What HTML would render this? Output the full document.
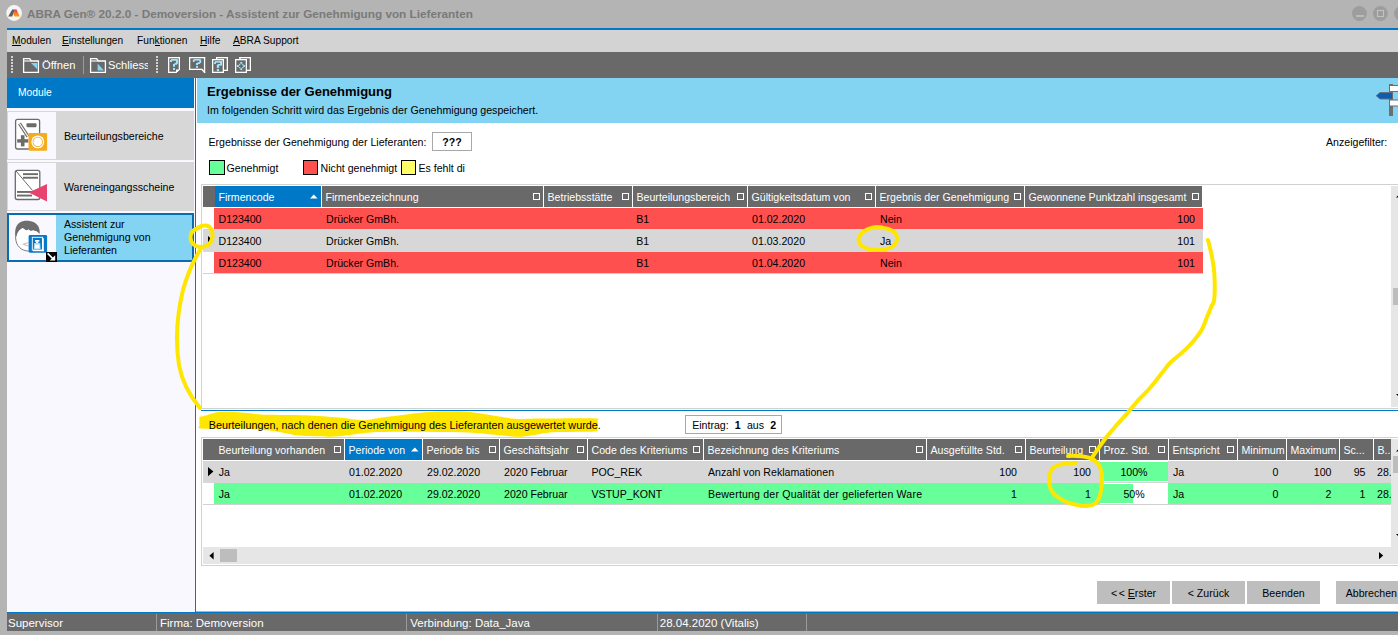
<!DOCTYPE html>
<html><head><meta charset="utf-8">
<style>
*{box-sizing:border-box;margin:0;padding:0}
html,body{width:1398px;height:635px;overflow:hidden;background:#b4b4b4;font-family:"Liberation Sans",sans-serif;font-size:10.6px;color:#000;position:relative}
.a{position:absolute}
.t{position:absolute;white-space:nowrap;line-height:13px}
svg{position:absolute;overflow:visible}
u{text-decoration:none;border-bottom:1px solid currentColor;display:inline-block;line-height:9.5px}
</style></head><body>
<svg style="left:5px;top:4px" width="19" height="19" viewBox="0 0 19 19"><defs><linearGradient id="lg" x1="0" y1="0" x2="0" y2="1"><stop offset="0" stop-color="#e8207a"/><stop offset="0.45" stop-color="#f5702a"/><stop offset="1" stop-color="#f5a800"/></linearGradient></defs><circle cx="9.1" cy="9" r="7.9" fill="#f4f4f4"/><path d="M3.2 12.6 L7.2 12.6 L10 5.4 L7.2 5.4 Z" fill="#5e5e5e"/><path d="M9.8 5.4 L11.5 5.4 L14.8 12.6 L9.4 12.6 L8.3 9.6 Z" fill="url(#lg)"/></svg>
<div class="t" style="left:27px;top:7.43px;font-size:11.76px;color:#7a7a7a;font-weight:bold;">ABRA Gen® 20.2.0 - Demoversion - Assistent zur Genehmigung von Lieferanten</div>
<svg style="left:1350px;top:5px" width="48" height="17"><circle cx="9.4" cy="8.5" r="7.4" fill="#9d9d9d"/><rect x="6" y="10.2" width="8" height="1.6" fill="#c2c2c2"/><circle cx="30.4" cy="8.5" r="7.4" fill="#9d9d9d"/><rect x="27.5" y="5.5" width="6" height="6" fill="none" stroke="#c2c2c2" stroke-width="1.1"/><circle cx="51.5" cy="8.5" r="7.4" fill="#9d9d9d"/></svg>
<div class="a" style="left:7px;top:28px;width:1391px;height:2px;background:#0078c8;"></div>
<div class="a" style="left:7px;top:30px;width:1391px;height:22px;background:#d3d3d3;"></div>
<div class="t" style="left:12px;top:33.97px;font-size:10.2px;color:#000;"><u>M</u>odulen</div>
<div class="t" style="left:62px;top:33.97px;font-size:10.2px;color:#000;"><u>E</u>instellungen</div>
<div class="t" style="left:137px;top:33.97px;font-size:10.2px;color:#000;">Fun<u>k</u>tionen</div>
<div class="t" style="left:200px;top:33.97px;font-size:10.2px;color:#000;"><u>H</u>ilfe</div>
<div class="t" style="left:233px;top:33.97px;font-size:10.2px;color:#000;"><u>A</u>BRA Support</div>
<div class="a" style="left:7px;top:52px;width:1391px;height:26px;background:#696969;"></div>
<svg style="left:11px;top:56px" width="2" height="17"><g fill="#d2d2d2"><rect y="0" width="2" height="2"/><rect y="3" width="2" height="2"/><rect y="6" width="2" height="2"/><rect y="9" width="2" height="2"/><rect y="12" width="2" height="2"/><rect y="15" width="2" height="2"/></g></svg>
<svg style="left:22px;top:57px" width="18" height="17" viewBox="0 0 18 17"><path d="M1.6 1.6 H7.6 L9.4 4 H16.4 V15.4 H1.6 Z" fill="none" stroke="#fff" stroke-width="1.3"/><path d="M1.6 4 H9.4" stroke="#fff" stroke-width="1.1"/><path d="M9 6 H15.2 V12.2 Z" fill="#83d3f2"/></svg>
<div class="t" style="left:42px;top:58.62px;font-size:11.2px;color:#fff;">Öffnen</div>
<div class="a" style="left:83px;top:56px;width:1px;height:18px;background:#9c9c9c;"></div>
<svg style="left:89px;top:57px" width="18" height="17" viewBox="0 0 18 17"><path d="M1.6 1.6 H7.6 L9.4 4 H16.4 V15.4 H1.6 Z" fill="none" stroke="#fff" stroke-width="1.3"/><path d="M1.6 4 H9.4" stroke="#fff" stroke-width="1.1"/><path d="M8.6 6.4 V13.4 H15 Z" fill="#83d3f2"/></svg>
<div class="a" style="left:108px;top:52px;width:40px;height:26px;overflow:hidden">
<div class="t" style="left:0px;top:6.62px;font-size:11.2px;color:#fff;">Schliessen</div>
</div>
<svg style="left:156px;top:56px" width="2" height="17"><g fill="#d2d2d2"><rect y="0" width="2" height="2"/><rect y="3" width="2" height="2"/><rect y="6" width="2" height="2"/><rect y="9" width="2" height="2"/><rect y="12" width="2" height="2"/><rect y="15" width="2" height="2"/></g></svg>
<svg style="left:0;top:0" width="260" height="78"><rect x="168" y="57" width="12" height="1.3" fill="#fff"/><rect x="168" y="57" width="1.3" height="16" fill="#fff"/><rect x="168" y="71.7" width="8.6" height="1.3" fill="#fff"/><rect x="178.7" y="57" width="1.3" height="12.8" fill="#fff"/><path d="M176 73 L176 69.6 L180 69.6 Z" fill="#fff"/><path d="M176.2 72.6 L179.6 69.6" stroke="#fff" stroke-width="1"/><rect x="170" y="60" width="2" height="2" fill="#9ee4fc"/><rect x="171" y="59" width="6.5" height="1.8" fill="#9ee4fc"/><rect x="176" y="59.5" width="2" height="4.3" fill="#9ee4fc"/><rect x="174.5" y="62.8" width="2.5" height="2" fill="#9ee4fc"/><rect x="173" y="64" width="2" height="2.8" fill="#9ee4fc"/><rect x="173" y="68" width="2" height="2" fill="#9ee4fc"/><rect x="189" y="57" width="16.2" height="1.3" fill="#fff"/><rect x="189" y="57" width="1.3" height="13" fill="#fff"/><rect x="189" y="68.7" width="13" height="1.3" fill="#fff"/><rect x="203.9" y="57" width="1.3" height="16" fill="#fff"/><path d="M201.8 69.3 L205 72.8" stroke="#fff" stroke-width="1.3"/><rect x="192.8" y="60" width="1.8" height="2" fill="#9ee4fc"/><rect x="193.5" y="59" width="6.8" height="1.6" fill="#9ee4fc"/><rect x="199.4" y="59.5" width="1.8" height="3.6" fill="#9ee4fc"/><rect x="197.5" y="62.2" width="2.5" height="1.8" fill="#9ee4fc"/><rect x="196" y="63" width="2" height="2.2" fill="#9ee4fc"/><rect x="196" y="66.1" width="2" height="1.9" fill="#9ee4fc"/><rect x="216" y="57" width="12" height="1.3" fill="#fff"/><rect x="216" y="57" width="1.3" height="2" fill="#fff"/><rect x="226.7" y="57" width="1.3" height="14" fill="#fff"/><rect x="224" y="69.7" width="4" height="1.3" fill="#fff"/><rect x="212" y="59" width="12" height="1.3" fill="#fff"/><rect x="212" y="59" width="1.3" height="14" fill="#fff"/><rect x="212" y="71.7" width="12" height="1.3" fill="#fff"/><rect x="222.7" y="59" width="1.3" height="14" fill="#fff"/><rect x="214.1" y="62" width="1.9" height="2" fill="#9ee4fc"/><rect x="214.9" y="61.1" width="7" height="1.6" fill="#9ee4fc"/><rect x="220.1" y="61.1" width="1.9" height="4.3" fill="#9ee4fc"/><rect x="217.5" y="64" width="3.5" height="1.6" fill="#9ee4fc"/><rect x="216.8" y="65" width="2.3" height="2.9" fill="#9ee4fc"/><rect x="216.8" y="68.9" width="2.3" height="2.2" fill="#9ee4fc"/><rect x="239.3" y="57" width="11.7" height="1.3" fill="#fff"/><rect x="239.3" y="57" width="1.3" height="2" fill="#fff"/><rect x="249.7" y="57" width="1.3" height="14" fill="#fff"/><rect x="247" y="69.7" width="4" height="1.3" fill="#fff"/><rect x="235" y="59" width="12" height="1.3" fill="#fff"/><rect x="235" y="59" width="1.3" height="14" fill="#fff"/><rect x="235" y="71.7" width="12" height="1.3" fill="#fff"/><rect x="245.7" y="59" width="1.3" height="14" fill="#fff"/><rect x="240.3" y="62" width="1.9" height="1.8" fill="#9ee4fc"/><rect x="236.9" y="65.1" width="1.9" height="1.9" fill="#9ee4fc"/><rect x="243.2" y="65.1" width="1.9" height="1.9" fill="#9ee4fc"/><rect x="240.3" y="68.2" width="1.9" height="1.9" fill="#9ee4fc"/><rect x="239.2" y="63.8" width="1.1" height="1.3" fill="#9ee4fc"/><rect x="242.2" y="63.8" width="1.1" height="1.3" fill="#9ee4fc"/><rect x="238.8" y="64.6" width="0.9" height="0.9" fill="#9ee4fc"/><rect x="242.6" y="64.6" width="0.9" height="0.9" fill="#9ee4fc"/><rect x="239.2" y="67" width="1.1" height="1.2" fill="#9ee4fc"/><rect x="242.2" y="67" width="1.1" height="1.2" fill="#9ee4fc"/><rect x="238.8" y="67.2" width="0.9" height="0.9" fill="#9ee4fc"/><rect x="242.6" y="67.2" width="0.9" height="0.9" fill="#9ee4fc"/></svg>
<div class="a" style="left:7px;top:78px;width:188px;height:534px;background:#f8f8fe;"></div>
<div class="a" style="left:7px;top:78px;width:187px;height:30px;background:#0078c8;"></div>
<div class="t" style="left:18px;top:85.93px;font-size:10.3px;color:#fff;">Module</div>
<div class="a" style="left:7px;top:111px;width:187px;height:49px;background:#d7d7d7;"></div>
<div class="a" style="left:8px;top:112px;width:48px;height:47px;background:#f8f8fe;"></div>
<svg style="left:8px;top:112px" width="48" height="48" viewBox="0 0 48 48">
<rect x="7.6" y="7.4" width="24" height="29.6" rx="2" fill="#fff" stroke="#6b6b6b" stroke-width="1.3"/>
<path d="M11.5 11.5 L20 24.5" stroke="#6b6b6b" stroke-width="3.2"/><path d="M11.5 11.5 L20 24.5" stroke="#fff" stroke-width="1.2"/>
<rect x="18.5" y="11.2" width="10" height="4" rx="1" fill="#6b6b6b"/>
<rect x="9.2" y="27.2" width="11.2" height="3.4" fill="#6b6b6b"/><rect x="12.9" y="23.2" width="3.6" height="11.2" fill="#6b6b6b"/>
<rect x="20.5" y="21" width="18.6" height="17.8" rx="1.2" fill="#f4ab1c"/>
<circle cx="29.8" cy="29.9" r="6.4" fill="#fff"/><circle cx="29.8" cy="29.9" r="5.2" fill="#f4ab1c"/><circle cx="29.8" cy="29.9" r="4.4" fill="#fff"/>
</svg>
<div class="t" style="left:64px;top:129.53px;font-size:10.6px;color:#000;">Beurteilungsbereiche</div>
<div class="a" style="left:7px;top:162px;width:187px;height:49px;background:#d7d7d7;"></div>
<div class="a" style="left:8px;top:163px;width:48px;height:47px;background:#f8f8fe;"></div>
<svg style="left:0px;top:150px" width="56" height="60" viewBox="0 0 56 60">
<rect x="15.3" y="20.3" width="24.5" height="29.2" rx="2" fill="#fff" stroke="#6b6b6b" stroke-width="1.3"/>
<path d="M16 21 L32.5 40.5" stroke="#6b6b6b" stroke-width="1"/>
<rect x="23" y="23.2" width="15" height="1.9" fill="#6b6b6b"/><rect x="23" y="26.8" width="15" height="1.9" fill="#6b6b6b"/>
<rect x="17" y="41" width="15" height="1.9" fill="#6b6b6b"/><rect x="17" y="44.6" width="15" height="1.9" fill="#6b6b6b"/>
<path d="M47 34 L28.8 42.4 L47 51.6 Z" fill="#e8436e"/>
</svg>
<div class="t" style="left:64px;top:180.83px;font-size:10.6px;color:#000;">Wareneingangsscheine</div>
<div class="a" style="left:7px;top:213px;width:187px;height:49px;background:#83d3f2;border:2px solid #0a6cb0;"></div>
<div class="a" style="left:9px;top:215px;width:47px;height:45px;background:#f8f8fe;"></div>
<svg style="left:0px;top:0px" width="60" height="270">
<path d="M15.5 238.5 C14.6 232 15.2 226.5 18.5 223.5 C21.5 221 25 220.7 28 220.8 C32 221 35.5 222.5 37.8 225.5 C39.5 228 39.9 231 39.7 234 L38.2 232.8 L36.7 231.6 L33.4 230.5 L30.4 231 L28.6 229.4 L26.7 230.5 L24.5 229.4 L22.7 228 L20.1 229.8 C18.5 231 17.2 233.5 16.6 236.4 Z" fill="#6e6e6e"/>
<path d="M16.6 236.4 C17.2 233.5 18.5 231 20.1 229.8 L22.7 228 L24.5 229.4 L26.7 230.5 L28.6 229.4 L30.4 231 L33.4 230.5 L36.7 231.6 L39.7 234 L29 236 L28.8 251.2 C24 250.5 20 248.5 17.8 245 C16.4 242.5 16 239.5 16.6 236.4 Z" fill="#fff"/>
<path d="M15.6 237.5 C15.8 242 17 245 19.5 247.5 C22 249.8 25 250.8 28.8 251.2" fill="none" stroke="#6e6e6e" stroke-width="0.9"/>
<path d="M28.2 242.6 L23.4 244.3 L28.2 246" fill="none" stroke="#c4c4c4" stroke-width="1.1"/>
<rect x="28.6" y="235" width="18.5" height="17.7" rx="1.4" fill="#0a78c8"/>
<rect x="32.3" y="237.3" width="10.3" height="12.8" fill="none" stroke="#fff" stroke-width="0.9"/>
<rect x="42" y="238.2" width="1.8" height="13" fill="#fff"/><rect x="33" y="249.8" width="10.8" height="1.4" fill="#fff"/>
<rect x="35" y="240" width="4.4" height="1.7" fill="#fff"/><rect x="36" y="241.5" width="2.3" height="1.7" fill="#fff"/>
<path d="M34.2 243.1 H40.2 L40.6 249.2 H33.8 Z" fill="#9fdcf6"/><rect x="34.8" y="244.6" width="4.6" height="3.8" fill="#fff"/>
<rect x="46" y="252" width="11" height="10" fill="#000"/>
<path d="M47.6 253.3 L52.6 258.3" stroke="#fff" stroke-width="1.7"/><path d="M55.2 255.2 V260.6 H49.8 Z" fill="#fff"/>
</svg>
<div class="t" style="left:64px;top:218.43px;line-height:12.8px;font-size:10.6px">Assistent zur<br>Genehmigung von<br>Lieferanten</div>
<div class="a" style="left:195px;top:78px;width:1px;height:534px;background:#0078c8;"></div>
<div class="a" style="left:196px;top:78px;width:1202px;height:533px;background:#fff;"></div>
<div class="a" style="left:197px;top:78px;width:1201px;height:45px;background:#83d3f2;"></div>
<div class="t" style="left:207px;top:84.50px;font-size:13px;color:#000;font-weight:bold;">Ergebnisse der Genehmigung</div>
<div class="t" style="left:207px;top:104.01px;font-size:10.65px;color:#000;">Im folgenden Schritt wird das Ergebnis der Genehmigung gespeichert.</div>
<svg style="left:1374px;top:82px" width="24" height="36" viewBox="0 0 24 36">
<rect x="15" y="2" width="4" height="32" fill="#6e6e6e"/>
<rect x="15.5" y="3.5" width="10" height="6" fill="#fff" stroke="#6e6e6e" stroke-width="1"/>
<path d="M18.5 10.5 H6 L2.2 13.8 L6 17 H18.5 Z" fill="#0a5fb4" stroke="#6e6e6e" stroke-width="0.9"/>
<rect x="15.5" y="18" width="10" height="6" fill="#fff" stroke="#6e6e6e" stroke-width="1"/>
</svg>
<div class="t" style="left:208.5px;top:135.63px;font-size:10.6px;color:#000;">Ergebnisse der Genehmigung der Lieferanten:</div>
<div class="a" style="left:432px;top:132px;width:40px;height:19px;background:#fff;border:1px solid #a8a8a8;"></div>
<div class="t" style="left:432px;width:40px;text-align:center;top:135.63px;font-size:10.6px;color:#000;font-weight:bold;">???</div>
<div class="t" style="left:1326px;top:135.63px;font-size:10.6px;color:#000;">Anzeigefilter:</div>
<div class="a" style="left:209px;top:160px;width:16px;height:15px;background:#66ff99;border:1px solid #000;"></div>
<div class="t" style="left:226.5px;top:162.03px;font-size:10.6px;color:#000;">Genehmigt</div>
<div class="a" style="left:303px;top:160px;width:15px;height:15px;background:#ff5050;border:1px solid #000;"></div>
<div class="t" style="left:320.6px;top:162.03px;font-size:10.6px;color:#000;">Nicht genehmigt</div>
<div class="a" style="left:401px;top:160px;width:15px;height:15px;background:#ffff66;border:1px solid #000;"></div>
<div class="t" style="left:418.4px;top:162.03px;font-size:10.6px;color:#000;">Es fehlt di</div>
<div class="a" style="left:201px;top:184px;width:1197px;height:225px;background:#fff;border:1px solid #d2d2d2;border-right:none;"></div>
<div class="a" style="left:203px;top:186px;width:12px;height:21px;background:#696969;"></div>
<div class="a" style="left:215px;top:186px;width:106px;height:21px;background:#0078c8;"></div>
<div class="t" style="left:218.5px;top:191.43px;font-size:10.6px;color:#fff;">Firmencode</div>
<svg style="left:310px;top:194px" width="8" height="5"><path d="M0 4.6 L3.75 0.6 L7.5 4.6 Z" fill="#fff"/></svg>
<div class="a" style="left:322px;top:186px;width:221px;height:21px;background:#696969;"></div>
<div class="t" style="left:325.5px;top:191.43px;font-size:10.6px;color:#fff;">Firmenbezeichnung</div>
<div class="a" style="left:533px;top:193px;width:7px;height:7px;border:1.2px solid #fff"></div>
<div class="a" style="left:544px;top:186px;width:88px;height:21px;background:#696969;"></div>
<div class="t" style="left:547.5px;top:191.43px;font-size:10.6px;color:#fff;">Betriebsstätte</div>
<div class="a" style="left:622px;top:193px;width:7px;height:7px;border:1.2px solid #fff"></div>
<div class="a" style="left:633px;top:186px;width:114px;height:21px;background:#696969;"></div>
<div class="t" style="left:636.5px;top:191.43px;font-size:10.6px;color:#fff;">Beurteilungsbereich</div>
<div class="a" style="left:737px;top:193px;width:7px;height:7px;border:1.2px solid #fff"></div>
<div class="a" style="left:748px;top:186px;width:127px;height:21px;background:#696969;"></div>
<div class="t" style="left:751.5px;top:191.43px;font-size:10.6px;color:#fff;">Gültigkeitsdatum von</div>
<div class="a" style="left:865px;top:193px;width:7px;height:7px;border:1.2px solid #fff"></div>
<div class="a" style="left:876px;top:186px;width:148px;height:21px;background:#696969;"></div>
<div class="t" style="left:879.5px;top:191.43px;font-size:10.6px;color:#fff;">Ergebnis der Genehmigung</div>
<div class="a" style="left:1014px;top:193px;width:7px;height:7px;border:1.2px solid #fff"></div>
<div class="a" style="left:1025px;top:186px;width:177px;height:21px;background:#696969;"></div>
<div class="t" style="left:1028.5px;top:191.43px;font-size:10.6px;color:#fff;">Gewonnene Punktzahl insgesamt</div>
<div class="a" style="left:1192px;top:193px;width:7px;height:7px;border:1.2px solid #fff"></div>
<div class="a" style="left:214px;top:208px;width:989px;height:21px;background:#ff5050;"></div>
<div class="t" style="left:218.5px;top:212.63px;font-size:10.6px;color:#000;">D123400</div>
<div class="t" style="left:326px;top:212.63px;font-size:10.6px;color:#000;">Drücker GmBh.</div>
<div class="t" style="left:636.2px;top:212.63px;font-size:10.6px;color:#000;">B1</div>
<div class="t" style="left:752px;top:212.63px;font-size:10.6px;color:#000;">01.02.2020</div>
<div class="t" style="left:880px;top:212.63px;font-size:10.6px;color:#000;">Nein</div>
<div class="t" style="left:795px;width:400px;text-align:right;top:212.63px;font-size:10.6px;color:#000;">100</div>
<div class="a" style="left:203px;top:229px;width:1000px;height:23px;background:#d7d7d7;"></div>
<div class="t" style="left:218.5px;top:234.63px;font-size:10.6px;color:#000;">D123400</div>
<div class="t" style="left:326px;top:234.63px;font-size:10.6px;color:#000;">Drücker GmBh.</div>
<div class="t" style="left:636.2px;top:234.63px;font-size:10.6px;color:#000;">B1</div>
<div class="t" style="left:752px;top:234.63px;font-size:10.6px;color:#000;">01.03.2020</div>
<div class="t" style="left:880px;top:234.63px;font-size:10.6px;color:#000;">Ja</div>
<div class="t" style="left:795px;width:400px;text-align:right;top:234.63px;font-size:10.6px;color:#000;">101</div>
<div class="a" style="left:214px;top:252px;width:989px;height:21px;background:#ff5050;"></div>
<div class="t" style="left:218.5px;top:256.63px;font-size:10.6px;color:#000;">D123400</div>
<div class="t" style="left:326px;top:256.63px;font-size:10.6px;color:#000;">Drücker GmBh.</div>
<div class="t" style="left:636.2px;top:256.63px;font-size:10.6px;color:#000;">B1</div>
<div class="t" style="left:752px;top:256.63px;font-size:10.6px;color:#000;">01.04.2020</div>
<div class="t" style="left:880px;top:256.63px;font-size:10.6px;color:#000;">Nein</div>
<div class="t" style="left:795px;width:400px;text-align:right;top:256.63px;font-size:10.6px;color:#000;">101</div>
<svg style="left:207.5px;top:235.5px" width="6" height="9"><path d="M0 0 L5.2 4.5 L0 9 Z" fill="#000"/></svg>
<div class="a" style="left:203px;top:273px;width:1000px;height:1px;background:#d2d2d2;"></div>
<div class="a" style="left:1391px;top:186px;width:7px;height:221px;background:#e6e6e6;"></div>
<svg style="left:1395.5px;top:194px" width="6" height="4"><path d="M0 3.5 L3.5 0 L7 3.5 Z" fill="#000"/></svg>
<div class="a" style="left:1393px;top:288px;width:5px;height:17px;background:#bdbdbd;"></div>
<svg style="left:1395.5px;top:394px" width="6" height="4"><path d="M0 0 L3.5 3.5 L7 0 Z" fill="#000"/></svg>
<div class="a" style="left:201px;top:410px;width:1197px;height:1px;background:#0078c8;"></div>
<svg style="left:0;top:0" width="1398" height="635">
<path d="M200.0 416.8 C201.2 416.2 203.7 416.0 206.8 415.2 C209.9 414.4 214.0 412.6 218.6 412.1 C223.2 411.6 229.1 411.8 234.3 412.0 C239.5 412.2 244.8 412.8 250.0 413.3 C255.2 413.8 256.6 414.5 265.8 414.8 C275.0 415.1 292.8 414.7 305.0 415.2 C317.2 415.7 329.7 416.8 339.3 417.6 C348.9 418.5 356.3 420.2 362.9 420.3 C369.5 420.4 370.8 419.1 378.7 418.0 C386.6 416.9 401.7 415.0 410.0 414.0 C418.3 413.0 422.9 412.6 428.6 412.1 C434.3 411.7 437.8 411.4 444.3 411.3 C450.9 411.2 460.0 411.1 467.9 411.7 C475.8 412.3 483.6 414.0 491.5 415.2 C499.4 416.4 506.9 418.2 515.0 418.8 C523.1 419.4 526.8 418.7 540.0 418.6 C553.2 418.5 584.4 418.1 594.0 418.4 C603.6 418.7 596.9 418.6 597.5 420.5 C598.1 422.4 598.1 427.7 597.5 429.5 C596.9 431.3 600.7 431.0 594.0 431.4 C587.3 431.8 566.0 431.7 557.2 432.1 C548.5 432.5 546.8 433.0 541.5 433.7 C536.2 434.4 530.1 435.8 525.7 436.3 C521.3 436.8 519.4 436.9 515.0 436.7 C510.6 436.5 505.9 435.9 499.4 435.3 C492.9 434.7 485.0 433.4 475.8 432.9 C466.6 432.4 455.3 432.3 444.3 432.1 C433.3 431.9 420.9 431.8 410.0 431.8 C399.1 431.8 386.6 431.9 378.7 432.1 C370.8 432.4 368.1 432.8 362.9 433.3 C357.6 433.8 352.4 434.7 347.2 435.3 C342.0 435.9 338.5 436.6 331.5 436.7 C324.5 436.8 312.0 436.5 305.0 436.1 C298.0 435.7 294.6 435.0 289.4 434.1 C284.2 433.2 280.3 431.9 273.7 431.0 C267.1 430.1 257.9 429.4 250.0 429.0 C242.1 428.6 234.7 428.7 226.5 428.6 C218.3 428.5 205.5 429.2 201.0 428.6 C196.5 428.0 199.8 426.6 199.5 425.0 C199.2 423.4 199.4 420.4 199.5 419.0 C199.6 417.6 198.8 417.4 200.0 416.8 Z" fill="#ffe600"/>
</svg>
<div class="t" style="left:208.8px;top:418.76px;font-size:10.8px;color:#000;">Beurteilungen, nach denen die Genehmigung des Lieferanten ausgewertet wurde.</div>
<div class="a" style="left:685px;top:415px;width:97px;height:19px;background:#fff;border:1px solid #a8a8a8;"></div>
<div class="t" style="left:692.2px;top:418.73px;font-size:10.6px;color:#000;word-spacing:3.2px;">Eintrag: <b>1</b> aus <b>2</b></div>
<div class="a" style="left:201px;top:437px;width:1197px;height:129px;background:#fff;border:1px solid #d2d2d2;border-right:none;"></div>
<div class="a" style="left:203px;top:439px;width:141px;height:21px;background:#696969;"></div>
<div class="a" style="left:203px;top:439px;width:141px;height:21px;overflow:hidden">
<div class="t" style="left:15.5px;top:5.43px;font-size:10.6px;color:#fff;">Beurteilung vorhanden</div>
</div>
<div class="a" style="left:334px;top:446px;width:7px;height:7px;border:1.2px solid #fff"></div>
<div class="a" style="left:345px;top:439px;width:77px;height:21px;background:#0078c8;"></div>
<div class="a" style="left:345px;top:439px;width:77px;height:21px;overflow:hidden">
<div class="t" style="left:3.5px;top:5.43px;font-size:10.6px;color:#fff;">Periode von</div>
</div>
<svg style="left:411px;top:447px" width="8" height="5"><path d="M0 4.6 L3.75 0.6 L7.5 4.6 Z" fill="#fff"/></svg>
<div class="a" style="left:423px;top:439px;width:76px;height:21px;background:#696969;"></div>
<div class="a" style="left:423px;top:439px;width:76px;height:21px;overflow:hidden">
<div class="t" style="left:3.5px;top:5.43px;font-size:10.6px;color:#fff;">Periode bis</div>
</div>
<div class="a" style="left:489px;top:446px;width:7px;height:7px;border:1.2px solid #fff"></div>
<div class="a" style="left:500px;top:439px;width:87px;height:21px;background:#696969;"></div>
<div class="a" style="left:500px;top:439px;width:87px;height:21px;overflow:hidden">
<div class="t" style="left:3.5px;top:5.43px;font-size:10.6px;color:#fff;">Geschäftsjahr</div>
</div>
<div class="a" style="left:577px;top:446px;width:7px;height:7px;border:1.2px solid #fff"></div>
<div class="a" style="left:588px;top:439px;width:115px;height:21px;background:#696969;"></div>
<div class="a" style="left:588px;top:439px;width:115px;height:21px;overflow:hidden">
<div class="t" style="left:3.5px;top:5.43px;font-size:10.6px;color:#fff;">Code des Kriteriums</div>
</div>
<div class="a" style="left:693px;top:446px;width:7px;height:7px;border:1.2px solid #fff"></div>
<div class="a" style="left:704px;top:439px;width:222px;height:21px;background:#696969;"></div>
<div class="a" style="left:704px;top:439px;width:222px;height:21px;overflow:hidden">
<div class="t" style="left:3.5px;top:5.43px;font-size:10.6px;color:#fff;">Bezeichnung des Kriteriums</div>
</div>
<div class="a" style="left:916px;top:446px;width:7px;height:7px;border:1.2px solid #fff"></div>
<div class="a" style="left:927px;top:439px;width:98px;height:21px;background:#696969;"></div>
<div class="a" style="left:927px;top:439px;width:98px;height:21px;overflow:hidden">
<div class="t" style="left:3.5px;top:5.43px;font-size:10.6px;color:#fff;">Ausgefüllte Std.</div>
</div>
<div class="a" style="left:1015px;top:446px;width:7px;height:7px;border:1.2px solid #fff"></div>
<div class="a" style="left:1026px;top:439px;width:73px;height:21px;background:#696969;"></div>
<div class="a" style="left:1026px;top:439px;width:73px;height:21px;overflow:hidden">
<div class="t" style="left:3.5px;top:5.43px;font-size:10.6px;color:#fff;">Beurteilung</div>
</div>
<div class="a" style="left:1089px;top:446px;width:7px;height:7px;border:1.2px solid #fff"></div>
<div class="a" style="left:1100px;top:439px;width:68px;height:21px;background:#696969;"></div>
<div class="a" style="left:1100px;top:439px;width:68px;height:21px;overflow:hidden">
<div class="t" style="left:3.5px;top:5.43px;font-size:10.6px;color:#fff;">Proz. Std.</div>
</div>
<div class="a" style="left:1158px;top:446px;width:7px;height:7px;border:1.2px solid #fff"></div>
<div class="a" style="left:1169px;top:439px;width:68px;height:21px;background:#696969;"></div>
<div class="a" style="left:1169px;top:439px;width:68px;height:21px;overflow:hidden">
<div class="t" style="left:3.5px;top:5.43px;font-size:10.6px;color:#fff;">Entspricht</div>
</div>
<div class="a" style="left:1227px;top:446px;width:7px;height:7px;border:1.2px solid #fff"></div>
<div class="a" style="left:1238px;top:439px;width:48px;height:21px;background:#696969;"></div>
<div class="a" style="left:1238px;top:439px;width:48px;height:21px;overflow:hidden">
<div class="t" style="left:3.5px;top:5.43px;font-size:10.6px;color:#fff;">Minimum</div>
</div>
<div class="a" style="left:1287px;top:439px;width:52px;height:21px;background:#696969;"></div>
<div class="a" style="left:1287px;top:439px;width:52px;height:21px;overflow:hidden">
<div class="t" style="left:3.5px;top:5.43px;font-size:10.6px;color:#fff;">Maximum</div>
</div>
<div class="a" style="left:1340px;top:439px;width:33px;height:21px;background:#696969;"></div>
<div class="a" style="left:1340px;top:439px;width:33px;height:21px;overflow:hidden">
<div class="t" style="left:3.5px;top:5.43px;font-size:10.6px;color:#fff;">Sc...</div>
</div>
<div class="a" style="left:1374px;top:439px;width:17px;height:21px;background:#696969;"></div>
<div class="a" style="left:1374px;top:439px;width:17px;height:21px;overflow:hidden">
<div class="t" style="left:3.5px;top:5.43px;font-size:10.6px;color:#fff;">B..</div>
</div>
<div class="a" style="left:203px;top:461px;width:1188px;height:22px;background:#d7d7d7;"></div>
<div class="a" style="left:1100px;top:461px;width:68px;height:21px;background:#fff;"></div>
<div class="a" style="left:1100px;top:462px;width:68px;height:19px;background:#66ff99;"></div>
<div class="t" style="left:218.7px;top:465.63px;font-size:10.6px;color:#000;">Ja</div>
<div class="t" style="left:349px;top:465.63px;font-size:10.6px;color:#000;">01.02.2020</div>
<div class="t" style="left:427px;top:465.63px;font-size:10.6px;color:#000;">29.02.2020</div>
<div class="t" style="left:504px;top:465.63px;font-size:10.6px;color:#000;">2020 Februar</div>
<div class="t" style="left:591.5px;top:465.63px;font-size:10.6px;color:#000;">POC_REK</div>
<div class="t" style="left:708px;top:465.63px;font-size:10.6px;color:#000;">Anzahl von Reklamationen</div>
<div class="t" style="left:617px;width:400px;text-align:right;top:465.63px;font-size:10.6px;color:#000;">100</div>
<div class="t" style="left:691px;width:400px;text-align:right;top:465.63px;font-size:10.6px;color:#000;">100</div>
<div class="t" style="left:1100px;width:68px;text-align:center;top:465.63px;font-size:10.6px;color:#000;">100%</div>
<div class="t" style="left:1173px;top:465.63px;font-size:10.6px;color:#000;">Ja</div>
<div class="t" style="left:878.5px;width:400px;text-align:right;top:465.63px;font-size:10.6px;color:#000;">0</div>
<div class="t" style="left:931.5px;width:400px;text-align:right;top:465.63px;font-size:10.6px;color:#000;">100</div>
<div class="t" style="left:965.5px;width:400px;text-align:right;top:465.63px;font-size:10.6px;color:#000;">95</div>
<div class="t" style="left:1377px;top:465.63px;font-size:10.6px;color:#000;width:14px;overflow:hidden;">28.</div>
<div class="a" style="left:214px;top:483px;width:1177px;height:21px;background:#66ff99;"></div>
<div class="a" style="left:1100px;top:483px;width:68px;height:21px;background:#fff;"></div>
<div class="a" style="left:1100px;top:484px;width:33px;height:19px;background:#66ff99;"></div>
<div class="t" style="left:218.7px;top:487.63px;font-size:10.6px;color:#000;">Ja</div>
<div class="t" style="left:349px;top:487.63px;font-size:10.6px;color:#000;">01.02.2020</div>
<div class="t" style="left:427px;top:487.63px;font-size:10.6px;color:#000;">29.02.2020</div>
<div class="t" style="left:504px;top:487.63px;font-size:10.6px;color:#000;">2020 Februar</div>
<div class="t" style="left:591.5px;top:487.63px;font-size:10.6px;color:#000;">VSTUP_KONT</div>
<div class="t" style="left:708px;top:487.63px;font-size:10.6px;color:#000;letter-spacing:0.17px;">Bewertung der Qualität der gelieferten Ware</div>
<div class="t" style="left:617px;width:400px;text-align:right;top:487.63px;font-size:10.6px;color:#000;">1</div>
<div class="t" style="left:691px;width:400px;text-align:right;top:487.63px;font-size:10.6px;color:#000;">1</div>
<div class="t" style="left:1100px;width:68px;text-align:center;top:487.63px;font-size:10.6px;color:#000;">50%</div>
<div class="t" style="left:1173px;top:487.63px;font-size:10.6px;color:#000;">Ja</div>
<div class="t" style="left:878.5px;width:400px;text-align:right;top:487.63px;font-size:10.6px;color:#000;">0</div>
<div class="t" style="left:931.5px;width:400px;text-align:right;top:487.63px;font-size:10.6px;color:#000;">2</div>
<div class="t" style="left:965.5px;width:400px;text-align:right;top:487.63px;font-size:10.6px;color:#000;">1</div>
<div class="t" style="left:1377px;top:487.63px;font-size:10.6px;color:#000;width:14px;overflow:hidden;">28.</div>
<div class="a" style="left:203px;top:504px;width:1188px;height:1px;background:#d2d2d2;"></div>
<svg style="left:207.5px;top:467.2px" width="6" height="9"><path d="M0 0 L5.4 4.6 L0 9.2 Z" fill="#000"/></svg>
<div class="a" style="left:1391px;top:439px;width:7px;height:108px;background:#e6e6e6;"></div>
<svg style="left:1395.5px;top:448px" width="6" height="4"><path d="M0 3.5 L3.5 0 L7 3.5 Z" fill="#000"/></svg>
<div class="a" style="left:1393px;top:456px;width:5px;height:17px;background:#bdbdbd;"></div>
<svg style="left:1395.5px;top:534px" width="6" height="4"><path d="M0 0 L3.5 3.5 L7 0 Z" fill="#000"/></svg>
<div class="a" style="left:203px;top:547px;width:1195px;height:17px;background:#e6e6e6;"></div>
<svg style="left:209px;top:551.5px" width="5" height="8"><path d="M4.6 0 L0.4 3.8 L4.6 7.6 Z" fill="#000"/></svg>
<div class="a" style="left:220px;top:549px;width:17px;height:13px;background:#bdbdbd;"></div>
<svg style="left:1379px;top:552px" width="5" height="8"><path d="M0 0 L4.2 3.6 L0 7.2 Z" fill="#000"/></svg>
<div class="a" style="left:1097px;top:581px;width:73px;height:23px;background:#bebebe;"></div>
<div class="t" style="left:1097px;width:73px;text-align:center;top:586.53px;font-size:10.6px;color:#000;">&lt;<span style="margin-left:1.5px">&lt;</span> <u>E</u>rster</div>
<div class="a" style="left:1172px;top:581px;width:73px;height:23px;background:#bebebe;"></div>
<div class="t" style="left:1172px;width:73px;text-align:center;top:586.53px;font-size:10.6px;color:#000;">&lt; Zurück</div>
<div class="a" style="left:1247px;top:581px;width:73px;height:23px;background:#bebebe;"></div>
<div class="t" style="left:1247px;width:73px;text-align:center;top:586.53px;font-size:10.6px;color:#000;">Beenden</div>
<div class="a" style="left:1336px;top:581px;width:84px;height:23px;background:#bebebe;"></div>
<div class="t" style="left:1345.7px;top:586.53px;font-size:10.6px;color:#000;">Abbrechen</div>
<div class="a" style="left:7px;top:612px;width:1391px;height:1px;background:#0078c8;"></div>
<div class="a" style="left:7px;top:613px;width:1391px;height:18px;background:#696969;"></div>
<div class="t" style="left:8px;top:616.52px;font-size:11.5px;color:#fff;">Supervisor</div>
<div class="t" style="left:160px;top:616.52px;font-size:11.5px;color:#fff;">Firma: Demoversion</div>
<div class="t" style="left:410.3px;top:616.52px;font-size:11.5px;color:#fff;">Verbindung: Data_Java</div>
<div class="t" style="left:659.8px;top:616.52px;font-size:11.5px;color:#fff;">28.04.2020 (Vitalis)</div>
<div class="a" style="left:156px;top:614px;width:1px;height:17px;background:#9a9a9a;"></div>
<div class="a" style="left:406px;top:614px;width:1px;height:17px;background:#9a9a9a;"></div>
<div class="a" style="left:657px;top:614px;width:1px;height:17px;background:#9a9a9a;"></div>
<div class="a" style="left:806px;top:614px;width:1px;height:17px;background:#9a9a9a;"></div>
<svg style="left:0;top:0" width="1398" height="635"><g fill="none" stroke="#ffe600" stroke-width="4" stroke-linecap="round" stroke-linejoin="round">
<path d="M198 227.5 C203 224.5 210 224 212 231 C214 239 210 246.5 202 247 C195 247.5 190.5 243 190.5 237.5 C190.5 232 194 229 199 228"/>
<path d="M202 247 C196 256 188 272 183 290 C177 315 175 340 179 365 C182 382 190 396 200 408"/>
<path d="M882 227.5 C873 225.5 863 230 859 237 C856.5 244 864 250 877 250 C890 250 897 245.5 897 238.5 C897 232 890 227.5 876 227.5"/>
<path d="M1208.0 240.0 C1208.7 242.8 1211.0 251.5 1212.0 257.0 C1213.0 262.5 1213.9 266.0 1214.3 273.0 C1214.7 280.0 1214.8 293.5 1214.3 299.0 C1213.8 304.5 1212.9 302.8 1211.6 306.0 C1210.3 309.2 1208.3 314.0 1206.6 318.0 C1204.9 322.0 1203.9 326.0 1201.6 330.0 C1199.3 334.0 1195.8 338.3 1192.7 342.0 C1189.6 345.7 1186.5 348.5 1182.7 352.0 C1178.9 355.5 1173.5 359.5 1170.0 363.0 C1166.5 366.5 1165.3 368.8 1162.0 373.0 C1158.7 377.2 1153.8 383.6 1150.0 388.0 C1146.2 392.4 1142.7 395.3 1139.0 399.4 C1135.3 403.5 1131.8 408.0 1127.8 412.6 C1123.8 417.2 1118.8 422.6 1115.0 427.0 C1111.2 431.4 1109.0 433.7 1105.0 439.0 C1101.0 444.3 1093.3 455.7 1091.0 459.0"/>
<path d="M1068 456 C1075 455.5 1088 456 1094 460 C1100 464 1102 470 1102 478 C1102 486 1101.5 497 1096 503 C1092 506 1086 506.5 1080 505.5 C1072 504.5 1062 501 1055 495 C1050 490 1048.5 484 1049 478 C1049.5 472 1052 467.5 1057 465.5 C1062 463.5 1070 463 1076 462.7"/>
</g></svg>
</body></html>
